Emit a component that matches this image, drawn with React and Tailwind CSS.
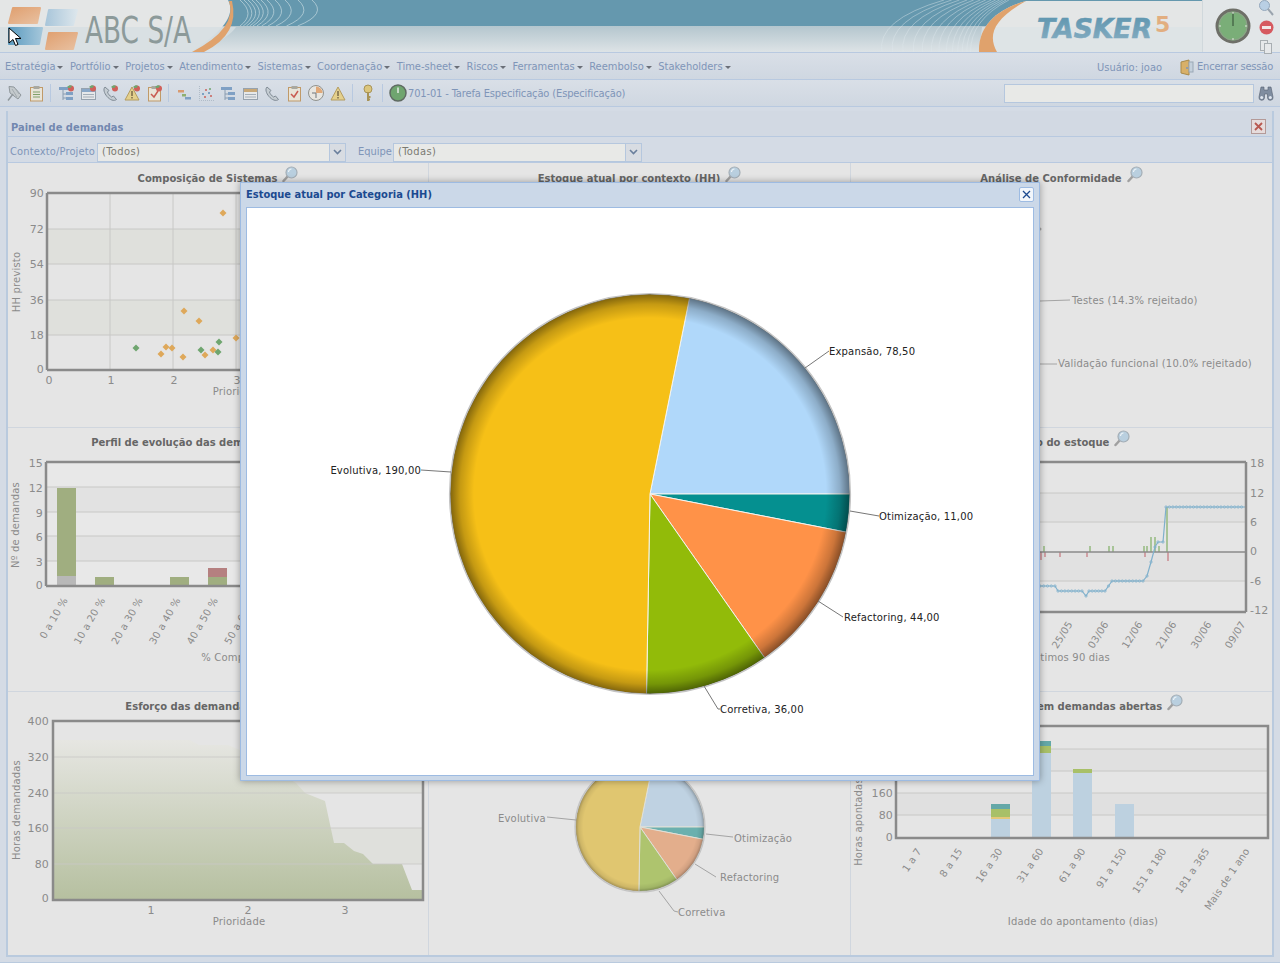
const menus = ['Estratégia', 'Portfólio', 'Projetos', 'Atendimento', 'Sistemas', 'Coordenação', 'Time-sheet', 'Riscos', 'Ferramentas', 'Reembolso', 'Stakeholders']

const axisColor = '#8a8a8a'
const labelColor = '#8b8b8b'

// Small toolbar icons
const Badge = () => (
  <>
    <circle cx="13" cy="3.5" r="3" fill="#d0605a" />
    <path d="M9 2c2-2 4-2 5-1-1 2-3 3-5 1z" fill="#6fa56f" />
  </>
)

const Tree = ({ badge }) => (
  <svg width="17" height="17" viewBox="0 0 17 17">
    <rect x="1" y="2" width="11" height="3" fill="#7fa0c4" />
    <path d="M5 5v10M5 9h3M5 13h3" stroke="#8a9cb0" fill="none" />
    <rect x="8" y="7" width="7" height="3" fill="#7fa0c4" />
    <rect x="8" y="12" width="7" height="3" fill="#7fa0c4" />
    {badge && <Badge />}
  </svg>
)

const Table = ({ badge }) => (
  <svg width="17" height="17" viewBox="0 0 17 17">
    <rect x="1.5" y="3.5" width="14" height="11" fill="#e6e8ea" stroke="#96a2ae" />
    <rect x="2" y="4" width="13" height="3" fill={badge ? '#8aa8c8' : '#c8a878'} />
    <path d="M3 9.5h11M3 12h11" stroke="#a4aeb8" />
    {badge && <Badge />}
  </svg>
)

const Phone = ({ badge }) => (
  <svg width="17" height="17" viewBox="0 0 17 17">
    <path d="M3 2C1 4 2 8 5 11.5s7 5 9.5 3l-3-3.5-2 1C8 11 6 9 5.500 7l1.500-1.500z" fill="#c4ccd2" stroke="#7f8a94" />
    {badge && <Badge />}
  </svg>
)

const Warn = ({ badge }) => (
  <svg width="17" height="17" viewBox="0 0 17 17">
    <path d="M8 2l7 13H1z" fill="#e4d08c" stroke="#b49c60" />
    <path d="M8 6v5M8 12v1.500" stroke="#7a6a48" strokeWidth="1.500" />
    {badge && <Badge />}
  </svg>
)

const Clip = ({ check, badge }) => (
  <svg width="17" height="17" viewBox="0 0 17 17">
    <rect x="2.500" y="2.500" width="12" height="13.500" fill="#e8e4d8" stroke="#c09a68" />
    <rect x="5.500" y="1" width="6" height="3" fill="#a8a8a0" />
    {check ? (
      <path d="M5 9l3 3 4-6" stroke="#c85a50" strokeWidth="1.500" fill="none" />
    ) : (
      <path d="M5 7h7M5 9.500h7M5 12h7" stroke="#7fa06a" />
    )}
    {badge && <Badge />}
  </svg>
)

const Gantt = () => (
  <svg width="17" height="17" viewBox="0 0 17 17">
    <rect x="2" y="5" width="6" height="2.500" fill="#d89a70" />
    <rect x="6" y="9" width="4" height="2.500" fill="#8faf70" />
    <rect x="9" y="12" width="6" height="2.500" fill="#7fa0c4" />
  </svg>
)

const Scatter = () => (
  <svg width="17" height="17" viewBox="0 0 17 17">
    <path d="M1.500 1v14.500H16" stroke="#b0bcc8" fill="none" strokeDasharray="1 1" />
    <circle cx="5" cy="9" r="1" fill="#5f8fb8" />
    <circle cx="8" cy="5" r="1" fill="#c8605a" />
    <circle cx="12" cy="4" r="1" fill="#6fa56f" />
    <circle cx="11" cy="8" r="1" fill="#5f8fb8" />
    <circle cx="7" cy="12" r="1" fill="#c8605a" />
    <circle cx="13" cy="11" r="1" fill="#c8605a" />
  </svg>
)

const PieClock = () => (
  <svg width="18" height="18" viewBox="0 0 18 18">
    <circle cx="9" cy="9" r="7.500" fill="#e8e6e0" stroke="#90928e" />
    <path d="M9 9V2.500A6.500 6.500 0 0 1 15.500 9z" fill="#e0a878" />
    <path d="M9 9v5M9 9H5" stroke="#70767a" />
  </svg>
)

const Pin = () => (
  <svg width="17" height="17" viewBox="0 0 17 17">
    <path d="M3 1.500l5 .5 7 8-3 4-8-6z" fill="#c4cacd" stroke="#8f979c" />
    <path d="M6 4l5 8M9 3l4 6" stroke="#a4acb1" />
    <path d="M2 15.500L7 9" stroke="#8f979c" strokeWidth="1.400" />
  </svg>
)

const Key = () => (
  <svg width="14" height="18" viewBox="0 0 14 18">
    <circle cx="7" cy="5" r="4" fill="#dcc67c" stroke="#a89458" />
    <path d="M7 8v9M7 13h2.500M7 15.500h2" stroke="#a89458" strokeWidth="2" fill="none" />
  </svg>
)

const GreenClock = () => (
  <svg width="18" height="18" viewBox="0 0 18 18">
    <circle cx="9" cy="9" r="8" fill="#6fa56f" stroke="#5f6a62" strokeWidth="1.500" />
    <path d="M9 3.500V9" stroke="#e4ece4" strokeWidth="1.500" />
  </svg>
)

const Binoculars = () => (
  <svg width="16" height="16" viewBox="0 0 16 16">
    <path d="M3 2h3v3h4V2h3l2 10a2.500 2.500 0 0 1-5.500 1V9H6.500v4A2.500 2.500 0 0 1 1 12z" fill="#7f8da0" stroke="#56606e" strokeWidth=".6" />
    <circle cx="3.700" cy="12.500" r="1.500" fill="#dfe6ee" />
    <circle cx="12.300" cy="12.500" r="1.500" fill="#dfe6ee" />
  </svg>
)

const Magnifier = () => (
  <svg width="16" height="17" viewBox="0 0 16 17" className="shrink-0">
    <path d="M6 10L1.500 15" stroke="#a0a0a0" strokeWidth="2.500" strokeLinecap="round" />
    <circle cx="9.500" cy="6.500" r="5.500" fill="#b9cfdf" stroke="#a4aeb6" strokeWidth="1.200" />
    <path d="M6.500 6a3 3 0 0 1 3-3" stroke="#eef4f8" strokeWidth="1.200" fill="none" />
  </svg>
)

const Sep = () => <div className="ml-[3px] mr-[4px] h-[18px] w-px bg-[#b8c9e0]" />

const Tool = ({ children }) => <div className="flex w-[22px] justify-center">{children}</div>

// Header artwork
const BannerLeft = () => (
  <svg width="330" height="52" viewBox="0 0 330 52" className="block shrink-0">
    <defs>
      <linearGradient id="bandLow" x1="0" y1="0" x2="0" y2="1">
        <stop offset="0" stopColor="#b4c6ce" />
        <stop offset="1" stopColor="#dde3e6" />
      </linearGradient>
      <linearGradient id="logoBlue" x1="0" y1="0" x2="1" y2="0">
        <stop offset="0" stopColor="#5c9cc0" />
        <stop offset="1" stopColor="#a4c6da" />
      </linearGradient>
      <linearGradient id="logoPale" x1="0" y1="0" x2="1" y2="0">
        <stop offset="0" stopColor="#a9c6da" />
        <stop offset="1" stopColor="#dce6ec" />
      </linearGradient>
      <linearGradient id="logoOrange" x1="0" y1="0" x2="1" y2="1">
        <stop offset="0" stopColor="#e0a070" />
        <stop offset="1" stopColor="#e8c0a0" />
      </linearGradient>
    </defs>
    <rect width="330" height="26" fill="#6598ae" />
    <rect y="26" width="330" height="26" fill="url(#bandLow)" />
    <clipPath id="ringsLeft"><rect width="330" height="26" /></clipPath>
    <g clipPath="url(#ringsLeft)">
      <g fill="none" stroke="#cfe0e6" strokeOpacity=".7" strokeWidth=".9">
        {[0, 4, 8, 12, 16, 21, 27, 35, 45, 58, 72].map((d) => (
          <path key={d} d={`M${240 + d} 0Q${256 + d} 14 ${240 + d * 0.8} 26`} />
        ))}
      </g>
    </g>
    <path d="M0 0H228Q240 22 190 52H0z" fill="#e4e6e6" />
    <path d="M0 27H236Q226 42 190 52H0z" fill="#d6dee2" fillOpacity=".8" />
    <path d="M229 1Q238 28 192 52H204Q240 34 232 1z" fill="#e0a26c" />
    <g strokeLinejoin="round" strokeWidth="2">
      <path d="M13 8H40L37 23H9z" fill="url(#logoOrange)" stroke="url(#logoOrange)" />
      <path d="M49 10H77L73 25H46z" fill="url(#logoPale)" stroke="url(#logoPale)" />
      <path d="M9 28H42L39 44H9z" fill="url(#logoBlue)" stroke="url(#logoBlue)" />
      <path d="M49 33H77L73 49H46z" fill="url(#logoOrange)" stroke="url(#logoOrange)" />
    </g>
    <text x="85" y="43" fontFamily="'DejaVu Sans', sans-serif" fontSize="37" fill="#8c9a9a" textLength="106" lengthAdjust="spacingAndGlyphs">ABC S/A</text>
  </svg>
)

const BannerRight = () => (
  <svg width="332" height="52" viewBox="0 0 332 52" className="block shrink-0">
    <defs>
      <linearGradient id="bandLowR" x1="0" y1="0" x2="0" y2="1">
        <stop offset="0" stopColor="#b4c6ce" />
        <stop offset="1" stopColor="#dde3e6" />
      </linearGradient>
      <linearGradient id="taskerBlue" x1="0" y1="0" x2="0" y2="1">
        <stop offset="0" stopColor="#5c94ae" />
        <stop offset="1" stopColor="#88aec2" />
      </linearGradient>
    </defs>
    <rect width="332" height="26" fill="#6598ae" />
    <rect y="26" width="332" height="26" fill="url(#bandLowR)" />
    <g fill="none" stroke="#dfe8ec" strokeOpacity=".55" strokeWidth=".8">
      {[0, 14, 28, 42, 54, 66, 76, 86, 94, 101, 107, 113, 118].map((d) => (
        <path key={d} d={`M${12 + d * 0.75} 52Q${6 + d * 0.8} 20 ${74 + d * 0.55} 0`} />
      ))}
    </g>
    <path d="M156 1C130 8 108 24 109 52H332V1z" fill="#e4e6e6" />
    <path d="M112 27H332V52H109z" fill="#dbe3e6" fillOpacity=".7" />
    <path d="M156 1C130 8 108 24 109 52H127C118 36 122 20 156 1z" fill="#e0a26c" />
    <text x="167" y="38" fontFamily="'DejaVu Sans', sans-serif" fontSize="26" fontWeight="bold" fontStyle="italic" fill="url(#taskerBlue)" stroke="url(#taskerBlue)" strokeWidth=".6" textLength="115" lengthAdjust="spacingAndGlyphs">TASKER</text>
    <text x="285" y="32" fontFamily="'DejaVu Sans', sans-serif" fontSize="22" fontWeight="bold" fill="#e2ae80">5</text>
  </svg>
)

const BigClock = () => (
  <svg width="36" height="36" viewBox="0 0 36 36">
    <circle cx="18" cy="18" r="16" fill="#7aae78" stroke="#6e6f68" strokeWidth="3" />
    <circle cx="18" cy="18" r="14" fill="none" stroke="#8fa08a" />
    <path d="M18 5v13" stroke="#4a6a4a" strokeWidth="1.500" />
    <path d="M18 4v2M18 30v2M4 18h2M30 18h2" stroke="#e4e8e0" />
  </svg>
)

// Charts: viewBoxes use page coordinates so numbers read straight off the screenshot
const ChartText = ({ x, y, children, anchor = 'start', size = 10, rotate, fill = labelColor }) => (
  <text
    x={x}
    y={y}
    fontSize={size}
    fill={fill}
    textAnchor={anchor}
    transform={rotate ? `rotate(${rotate} ${x} ${y})` : undefined}
  >
    {children}
  </text>
)

const Cell = ({ title, x, y, first, last, children }) => (
  <div className={`flex flex-col ${last ? '' : 'border-r border-[#d0d6de]'}`}>
    <div className="flex h-[21px] items-start justify-center gap-[5px] text-[10px] font-bold leading-[14px] text-[#666]">
      <span className={`whitespace-nowrap font-['DejaVu_Sans'] ${first ? 'mt-[9px]' : 'mt-[8px]'}`}>{title}</span>
      <span className={first ? 'mt-[3px]' : 'mt-[2px]'}><Magnifier /></span>
    </div>
    <svg viewBox={`${x} ${y} 420 242`} className="block h-[242px] w-[420px] font-['DejaVu_Sans'] tracking-[0.18px]">
      {children}
    </svg>
  </div>
)

const Frame = ({ x, y, w, h }) => (
  <rect x={x} y={y} width={w} height={h} fill="none" stroke={axisColor} strokeWidth="2.500" />
)

const HLines = ({ x1, x2, ys }) => (
  <g stroke="#c8c8c6">
    {ys.map((y) => <line key={y} x1={x1} x2={x2} y1={y} y2={y} />)}
  </g>
)

const dots = {
  orange: [[223, 213], [184, 311], [199, 321], [236, 338], [161, 354], [166, 347], [172, 348], [183, 357], [205, 355], [213, 350]],
  green: [[136, 348], [201, 350], [219, 342], [218, 352]],
}

const Diamond = ({ x, y, fill }) => (
  <path d={`M${x} ${y - 3.5}L${x + 3.5} ${y}L${x} ${y + 3.5}L${x - 3.5} ${y}z`} fill={fill} />
)

const ScatterChart = () => (
  <>
    <rect x="47" y="229" width="380" height="35" fill="#dfe0dc" />
    <rect x="47" y="300" width="380" height="35" fill="#dfe0dc" />
    <HLines x1={47} x2={427} ys={[229, 264, 300, 335]} />
    <g stroke="#c8c8c6">
      {[110, 173, 236].map((x) => <line key={x} x1={x} x2={x} y1={193} y2={370} />)}
    </g>
    <line x1="47" x2="427" y1="193" y2="193" stroke={axisColor} strokeWidth="2.500" />
    <line x1="47" x2="427" y1="370" y2="370" stroke={axisColor} strokeWidth="2.500" />
    <line x1="47" x2="47" y1="193" y2="370" stroke={axisColor} strokeWidth="2.500" />
    {dots.orange.map(([x, y]) => <Diamond key={`${x}-${y}`} x={x} y={y} fill="#dea85a" />)}
    {dots.green.map(([x, y]) => <Diamond key={`${x}-${y}`} x={x} y={y} fill="#6fa56f" />)}
    {[['90', 197], ['72', 233], ['54', 268], ['36', 304], ['18', 339], ['0', 373]].map(([t, y]) => (
      <ChartText key={t} x={44} y={y} anchor="end" size={11}>{t}</ChartText>
    ))}
    {[['0', 49], ['1', 111], ['2', 174], ['3', 237]].map(([t, x]) => (
      <ChartText key={t} x={x} y={384} anchor="middle" size={11}>{t}</ChartText>
    ))}
    <ChartText x={239} y={395} anchor="middle">Prioridade</ChartText>
    <ChartText x={20} y={282} anchor="middle" rotate={-90}>HH previsto</ChartText>
  </>
)

const rangeLabels = ['0 a 10 %', '10 a 20 %', '20 a 30 %', '30 a 40 %', '40 a 50 %', '50 a 60 %']

const ProfileChart = () => (
  <>
    <rect x="46" y="462" width="382" height="124" fill="#e8e8e8" />
    <rect x="46" y="487" width="382" height="25" fill="#e2e2e2" />
    <rect x="46" y="536" width="382" height="25" fill="#e2e2e2" />
    <HLines x1={46} x2={428} ys={[487, 512, 536, 561]} />
    <rect x="57" y="488" width="19" height="88" fill="#a0ae80" />
    <rect x="57" y="576" width="19" height="9" fill="#b8b8b8" />
    <rect x="95" y="577" width="19" height="9" fill="#a0ae80" />
    <rect x="170" y="577" width="19" height="9" fill="#a0ae80" />
    <rect x="208" y="577" width="19" height="9" fill="#a0ae80" />
    <rect x="208" y="568" width="19" height="9" fill="#b58080" />
    <line x1="46" x2="428" y1="462" y2="462" stroke={axisColor} strokeWidth="2.500" />
    <line x1="46" x2="428" y1="586" y2="586" stroke={axisColor} strokeWidth="2.500" />
    <line x1="46" x2="46" y1="462" y2="586" stroke={axisColor} strokeWidth="2.500" />
    {[['15', 467], ['12', 492], ['9', 517], ['6', 541], ['3', 566], ['0', 589]].map(([t, y]) => (
      <ChartText key={t} x={43} y={y} anchor="end" size={11}>{t}</ChartText>
    ))}
    {rangeLabels.map((t, i) => (
      <ChartText key={t} x={68 + i * 37.600} y={600} anchor="end" rotate={-60}>{t}</ChartText>
    ))}
    <ChartText x={239} y={661} anchor="middle">% Completado</ChartText>
    <ChartText x={19} y={525} anchor="middle" rotate={-90}>Nº de demandas</ChartText>
  </>
)

const stockLine = [[1040, 586], [1055, 586], [1058, 591], [1082, 591], [1086, 596], [1089, 591], [1105, 591], [1112, 581], [1143, 581], [1147, 576], [1151, 562], [1155, 547], [1158, 542], [1163, 542], [1166, 507], [1245, 507]]

const stockDots = () => {
  const points = []
  stockLine.slice(1).forEach(([x, y], i) => {
    const [px, py] = stockLine[i]
    const steps = Math.max(1, Math.round((x - px) / 3.500))
    for (let s = 0; s < steps; s++) {
      points.push([px + ((x - px) * s) / steps, py + ((y - py) * s) / steps])
    }
  })
  return points
}

const StockChart = () => (
  <>
    <rect x="851" y="493" width="395" height="29" fill="#e1e1e1" />
    <rect x="851" y="552" width="395" height="29" fill="#e1e1e1" />
    <HLines x1={851} x2={1246} ys={[493, 522, 581]} />
    <g fill="#a8c498">
      {[[1043, 546], [1089, 546], [1108, 546], [1112, 546], [1143, 546], [1146, 546], [1150, 537], [1154, 537], [1158, 546], [1166, 507]].map(([x, y]) => (
        <rect key={x} x={x} y={y} width="2" height={552 - y} />
      ))}
    </g>
    <g fill="#d0a0a4">
      {[[1040, 560], [1044, 557], [1059, 557], [1086, 557], [1144, 557], [1167, 561]].map(([x, y]) => (
        <rect key={x} x={x} y={552} width="2" height={y - 552} />
      ))}
    </g>
    <line x1="851" x2="1246" y1="552" y2="552" stroke={axisColor} strokeWidth="1.500" />
    <polyline points={stockLine.map((p) => p.join(',')).join(' ')} fill="none" stroke="#7fb0cc" strokeWidth="1.200" />
    {stockDots().map(([x, y], i) => (
      <circle key={i} cx={x} cy={y} r="1.200" fill="none" stroke="#7fb0cc" strokeWidth=".7" />
    ))}
    <line x1="851" x2="1246" y1="462" y2="462" stroke={axisColor} strokeWidth="2.500" />
    <line x1="851" x2="1246" y1="612" y2="612" stroke={axisColor} strokeWidth="2.500" />
    <line x1="1246" x2="1246" y1="462" y2="612" stroke={axisColor} strokeWidth="2.500" />
    {[['18', 467], ['12', 497], ['6', 526], ['0', 555], ['-6', 585], ['-12', 614]].map(([t, y]) => (
      <ChartText key={t} x={1250} y={y} size={11}>{t}</ChartText>
    ))}
    {[['25/05', 1073], ['03/06', 1109], ['12/06', 1143], ['21/06', 1177], ['30/06', 1212], ['09/07', 1246]].map(([t, x]) => (
      <ChartText key={t} x={x} y={624} anchor="end" rotate={-58}>{t}</ChartText>
    ))}
    <ChartText x={1110} y={661} anchor="end">Últimos 90 dias</ChartText>
  </>
)

const effortArea = 'M54 899V740H190L199 745H228L240 750L296 783L305 793L315 797L325 801L334 843H344L354 851L363 854L373 864H402L412 890H422V899z'

const EffortChart = () => (
  <>
    <defs>
      <linearGradient id="effortFill" x1="0" y1="0" x2="0" y2="1">
        <stop offset="0" stopColor="#e6e6e2" />
        <stop offset="1" stopColor="#b6c0a0" />
      </linearGradient>
    </defs>
    <rect x="53" y="757" width="370" height="36" fill="#dfe0dc" />
    <rect x="53" y="828" width="370" height="36" fill="#dfe0dc" />
    <path d={effortArea} fill="url(#effortFill)" />
    <g strokeOpacity=".8"><HLines x1={53} x2={423} ys={[757, 793, 828, 864]} /></g>
    <Frame x={53} y={721} w={370} h={179} />
    {[['400', 725], ['320', 761], ['240', 797], ['160', 832], ['80', 868], ['0', 902]].map(([t, y]) => (
      <ChartText key={t} x={49} y={y} anchor="end" size={11}>{t}</ChartText>
    ))}
    {[['1', 151], ['2', 248], ['3', 345]].map(([t, x]) => (
      <ChartText key={t} x={x} y={914} anchor="middle" size={11}>{t}</ChartText>
    ))}
    <ChartText x={239} y={925} anchor="middle">Prioridade</ChartText>
    <ChartText x={20} y={810} anchor="middle" rotate={-90}>Horas demandadas</ChartText>
  </>
)

const slices = [
  { from: 11.400, to: 90, colors: ['#b0d8fa', '#bfd2e2'] },
  { from: 90, to: 101, colors: ['#059090', '#6bb0ae'] },
  { from: 101, to: 145, colors: ['#ff9248', '#e3ae8c'] },
  { from: 145, to: 181, colors: ['#92bb09', '#aec46e'] },
  { from: 181, to: 371.400, colors: ['#f6c017', '#e0c670'] },
]

const wedge = (cx, cy, r, from, to) => {
  const point = (deg) => {
    const rad = ((deg - 90) * Math.PI) / 180
    return `${cx + r * Math.cos(rad)} ${cy + r * Math.sin(rad)}`
  }
  return `M${cx} ${cy}L${point(from)}A${r} ${r} 0 ${to - from > 180 ? 1 : 0} 1 ${point(to)}z`
}

const Pie = ({ cx, cy, r, tone, shadeId, strong }) => (
  <g>
    <defs>
      <radialGradient id={shadeId} cx=".5" cy=".5" r=".5">
        <stop offset=".88" stopColor="#000" stopOpacity="0" />
        <stop offset=".95" stopColor="#000" stopOpacity={strong ? 0.2 : 0.08} />
        <stop offset="1" stopColor="#000" stopOpacity={strong ? 0.48 : 0.28} />
      </radialGradient>
    </defs>
    {slices.map((s) => (
      <path key={s.from} d={wedge(cx, cy, r, s.from, s.to)} fill={s.colors[tone]} stroke={strong ? '#f4f4f0' : '#e0e0d8'} strokeWidth="1" />
    ))}
    <circle cx={cx} cy={cy} r={r} fill={`url(#${shadeId})`} />
    <circle cx={cx} cy={cy} r={r + 0.500} fill="none" stroke="#c4c4c4" strokeWidth="1.200" />
  </g>
)

const SmallPie = () => (
  <>
    <Pie cx={640} cy={827} r={64.500} tone={1} shadeId="pieShadeSmall" />
    <g stroke="#a4a4a4" fill="none">
      <path d="M576 820L547 817" />
      <path d="M706 834L733 837" />
      <path d="M695 864L716 877" />
      <path d="M659 891L674 911L678 912" />
    </g>
    <ChartText x={498} y={822}>Evolutiva</ChartText>
    <ChartText x={734} y={842}>Otimização</ChartText>
    <ChartText x={720} y={881}>Refactoring</ChartText>
    <ChartText x={678} y={916}>Corretiva</ChartText>
  </>
)

const OpenHoursChart = () => (
  <>
    <rect x="896" y="749" width="372" height="22" fill="#e0e0e0" />
    <rect x="896" y="793" width="372" height="22" fill="#e0e0e0" />
    <HLines x1={896} x2={1268} ys={[749, 771, 793, 815]} />
    <rect x="991" y="819" width="19" height="18" fill="#bdd1e0" />
    <rect x="991" y="817" width="19" height="2" fill="#e4c878" />
    <rect x="991" y="809" width="19" height="8" fill="#a8c068" />
    <rect x="991" y="804" width="19" height="5" fill="#64a8a8" />
    <rect x="1032" y="753" width="19" height="84" fill="#bdd1e0" />
    <rect x="1032" y="746" width="19" height="7" fill="#a8c068" />
    <rect x="1032" y="741" width="19" height="5" fill="#64a8a8" />
    <rect x="1073" y="773" width="19" height="64" fill="#bdd1e0" />
    <rect x="1073" y="769" width="19" height="4" fill="#a8c068" />
    <rect x="1115" y="804" width="19" height="33" fill="#bdd1e0" />
    <Frame x={896} y={726} w={372} h={112} />
    {[['160', 797], ['80', 819], ['0', 841]].map(([t, y]) => (
      <ChartText key={t} x={893} y={y} anchor="end" size={11}>{t}</ChartText>
    ))}
    {[['1 a 7', 922], ['8 a 15', 963], ['16 a 30', 1003], ['31 a 60', 1044], ['61 a 90', 1086], ['91 a 150', 1127], ['151 a 180', 1167], ['181 a 365', 1210], ['Mais de 1 ano', 1250]].map(([t, x]) => (
      <ChartText key={t} x={x} y={851} anchor="end" rotate={-56}>{t}</ChartText>
    ))}
    <ChartText x={1083} y={925} anchor="middle">Idade do apontamento (dias)</ChartText>
    <ChartText x={862} y={822} anchor="middle" rotate={-90}>Horas apontadas</ChartText>
  </>
)

const BigPie = () => (
  <svg viewBox="247 208 786 567" className="block h-[567px] w-[786px] font-['DejaVu_Sans'] tracking-[0.18px]">
    <Pie cx={650} cy={494} r={200} tone={0} shadeId="pieShadeBig" strong />
    <g stroke="#777" fill="none">
      <path d="M805 368L829 351" />
      <path d="M850 511L879 516" />
      <path d="M818 601L843 617" />
      <path d="M704 686L718 709L720 709" />
      <path d="M421 470L451 472" />
    </g>
    <ChartText x={829} y={355} fill="#222">Expansão, 78,50</ChartText>
    <ChartText x={879} y={520} fill="#222">Otimização, 11,00</ChartText>
    <ChartText x={844} y={621} fill="#222">Refactoring, 44,00</ChartText>
    <ChartText x={720} y={713} fill="#222">Corretiva, 36,00</ChartText>
    <ChartText x={421} y={474} anchor="end" fill="#222">Evolutiva, 190,00</ChartText>
  </svg>
)

const Select = ({ value }) => (
  <div className="flex h-[19px] w-[249px] items-center border border-[#b5c7de] bg-[#e8e9e7]">
    <span className="flex-1 pl-[4px] tracking-[0.4px] text-[#7a7a72]">{value}</span>
    <span className="flex h-full w-[16px] items-center justify-center border-l border-[#b5c7de] bg-[#d8dce2]">
      <svg width="9" height="6" viewBox="0 0 9 6"><path d="M1 1l3.500 3.500L8 1" stroke="#6a7f9c" strokeWidth="1.600" fill="none" /></svg>
    </span>
  </div>
)

const App = () => {
  return (
    <div className="relative h-[963px] w-[1280px] overflow-hidden bg-[#d4dbe5] font-['DejaVu_Sans_Condensed','DejaVu_Sans',sans-serif] text-[11px] text-[#7f95b8]">
      {/* Banner */}
      <div className="flex h-[53px] border-b border-[#b8c9e0]">
        <BannerLeft />
        <div className="flex w-[540px] flex-col">
          <div className="h-[26px] bg-[#6598ae]" />
          <div className="h-[26px] bg-gradient-to-b from-[#b4c6ce] to-[#dde3e6]" />
        </div>
        <BannerRight />
        <div className="flex w-[78px] items-center border-l border-[#d0d8dc] bg-[#e2e6e8]">
          <div className="ml-[12px]"><BigClock /></div>
          <div className="ml-[7px] flex flex-col items-center gap-[4px]">
            <svg width="16" height="17" viewBox="0 0 16 17">
              <circle cx="6.500" cy="6.500" r="5" fill="#b9cfe4" stroke="#94a8bc" />
              <path d="M10 10l5 6" stroke="#9aa4ae" strokeWidth="2" />
            </svg>
            <svg width="15" height="15" viewBox="0 0 15 15">
              <circle cx="7.500" cy="7.500" r="7" fill="#d65a60" />
              <rect x="3" y="6" width="9" height="3" fill="#f2e8e8" />
            </svg>
            <svg width="14" height="15" viewBox="0 0 14 15">
              <rect x="1.500" y="1.500" width="7" height="10" fill="#e6e8ea" stroke="#a8aeb2" />
              <rect x="5.500" y="4.500" width="7" height="10" fill="#e6e8ea" stroke="#a8aeb2" />
            </svg>
          </div>
        </div>
      </div>

      {/* Menu */}
      <div className="flex h-[27px] items-center border-b border-[#b8c9e0] bg-gradient-to-b from-[#d9dfe7] to-[#cfd7e1] pl-[5px] pt-[2px]">
        {menus.map((m) => (
          <div key={m} className="mr-[6.5px] flex items-center whitespace-nowrap">
            {m}
            <span className="ml-[2px] mt-[1px] h-0 w-0 border-x-[3px] border-t-[3px] border-x-transparent border-t-[#6a6f78]" />
          </div>
        ))}
        <span className="ml-auto mt-[2px]">Usuário: joao</span>
        <svg width="14" height="17" viewBox="0 0 14 17" className="ml-[18px]">
          <path d="M1 3l8-2v15l-8-2z" fill="#d8b068" stroke="#a88a4a" />
          <rect x="9" y="3" width="4" height="10" fill="#c4d0dc" stroke="#9aa8b6" />
          <circle cx="7" cy="9" r="1" fill="#7f95b8" />
        </svg>
        <span className="ml-[3px] mr-[7px] tracking-[-0.2px]">Encerrar sessão</span>
      </div>

      {/* Toolbar */}
      <div className="flex h-[27px] items-center border-b border-[#b8c9e0] bg-gradient-to-b from-[#d9dfe7] to-[#cfd7e1] pl-[3px]">
        <Tool><Pin /></Tool>
        <Tool><Clip /></Tool>
        <Sep />
        <Tool><Tree badge /></Tool>
        <Tool><Table badge /></Tool>
        <Tool><Phone badge /></Tool>
        <Tool><Warn badge /></Tool>
        <Tool><Clip check badge /></Tool>
        <Sep />
        <Tool><Gantt /></Tool>
        <Tool><Scatter /></Tool>
        <Tool><Tree /></Tool>
        <Tool><Table /></Tool>
        <Tool><Phone /></Tool>
        <Tool><Clip check /></Tool>
        <Tool><PieClock /></Tool>
        <Tool><Warn /></Tool>
        <Sep />
        <Tool><Key /></Tool>
        <Sep />
        <div className="flex w-[21px] justify-center"><GreenClock /></div>
        <span className="mt-[2px] tracking-[-0.13px]">701-01 - Tarefa Especificação (Especificação)</span>
        <div className="ml-auto mr-[4px] h-[19px] w-[250px] border border-[#b5c7de] bg-[#e8e9e7]" />
        <div className="mr-[6px]"><Binoculars /></div>
      </div>

      {/* Panel */}
      <div className="mx-[6px] mt-[4px] border-x-2 border-b-2 border-[#b9cade] bg-[#d4dbe5]">
        <div className="flex h-[26px] items-center justify-between border-b border-[#b8c9e0] bg-[#d2d9e3] pl-[3px] pr-[6px] pt-[10px]">
          <span className="font-bold text-[#7288b0]">Painel de demandas</span>
          <div className="-mt-[5px] flex h-[15px] w-[15px] items-center justify-center border border-[#b49a98] bg-[#e6dcdc]">
            <svg width="9" height="9" viewBox="0 0 9 9"><path d="M1 1l7 7M8 1l-7 7" stroke="#b85850" strokeWidth="1.800" /></svg>
          </div>
        </div>
        <div className="flex h-[26px] items-center border-b border-[#b8c9e0] pl-[2px] pt-[5px]">
          <span className="w-[87px] tracking-[0.15px]">Contexto/Projeto</span>
          <Select value="(Todos)" />
          <span className="ml-[12px] w-[35px]">Equipe</span>
          <Select value="(Todas)" />
        </div>
        <div className="grid grid-cols-[421px_422px_421px] grid-rows-[264px_264px_264px] bg-[#e5e5e5]">
          <Cell first title="Composição de Sistemas" x={8} y={184}><ScatterChart /></Cell>
          <Cell first title="Estoque atual por contexto (HH)" x={429} y={184} />
          <Cell first last title="Análise de Conformidade" x={851} y={184}>
            <path d="M1040 301L1070 300M1040 364L1057 364" stroke="#a4a4a4" fill="none" />
            <circle cx="1040" cy="229" r="1.500" fill="#a4a4a4" />
            <ChartText x={1072} y={304}>Testes (14.3% rejeitado)</ChartText>
            <ChartText x={1058} y={367}>Validação funcional (10.0% rejeitado)</ChartText>
          </Cell>
          <div className="col-span-3 grid grid-cols-subgrid border-t border-[#d0d6de]">
            <Cell title="Perfil de evolução das demandas abertas" x={8} y={449}><ProfileChart /></Cell>
            <Cell title="Estoque por fase" x={429} y={449} />
            <Cell last title="Evolução do estoque" x={851} y={449}><StockChart /></Cell>
          </div>
          <div className="col-span-3 grid grid-cols-subgrid border-t border-[#d0d6de]">
            <Cell title="Esforço das demandas ativas" x={8} y={713}><EffortChart /></Cell>
            <Cell title="Estoque atual por Categoria" x={429} y={713}><SmallPie /></Cell>
            <Cell last title="Tempo apontado em demandas abertas" x={851} y={713}><OpenHoursChart /></Cell>
          </div>
        </div>
      </div>
      <div className="absolute inset-x-0 bottom-0 h-px bg-[#b9cade]" />

      {/* Dialog */}
      <div className="absolute left-[240px] top-[182px] flex h-[599px] w-[800px] flex-col border border-[#9dbbe2] bg-[#cbd8e8] px-[5px] pb-[4px] shadow-[0_0_7px_rgba(0,0,0,0.35)]">
        <div className="flex h-[24px] shrink-0 items-center justify-between">
          <span className="font-bold text-[#1c4a90]">Estoque atual por Categoria (HH)</span>
          <div className="-mt-[2px] flex h-[15px] w-[15px] items-center justify-center rounded-[2px] border border-[#9dbbe2] bg-[#f2f6fb]">
            <svg width="9" height="9" viewBox="0 0 9 9"><path d="M1 1l7 7M8 1l-7 7" stroke="#1c4a90" strokeWidth="1.300" /></svg>
          </div>
        </div>
        <div className="flex-1 border border-[#9dbbe2] bg-white">
          <BigPie />
        </div>
      </div>

      {/* Mouse pointer */}
      <svg width="14" height="20" viewBox="0 0 14 20" className="absolute left-[8px] top-[27px]">
        <path d="M1 1v15l4-3.500 2.500 6 2.500-1-2.500-6H13z" fill="#fff" stroke="#000" />
      </svg>
    </div>
  )
}

export default App
